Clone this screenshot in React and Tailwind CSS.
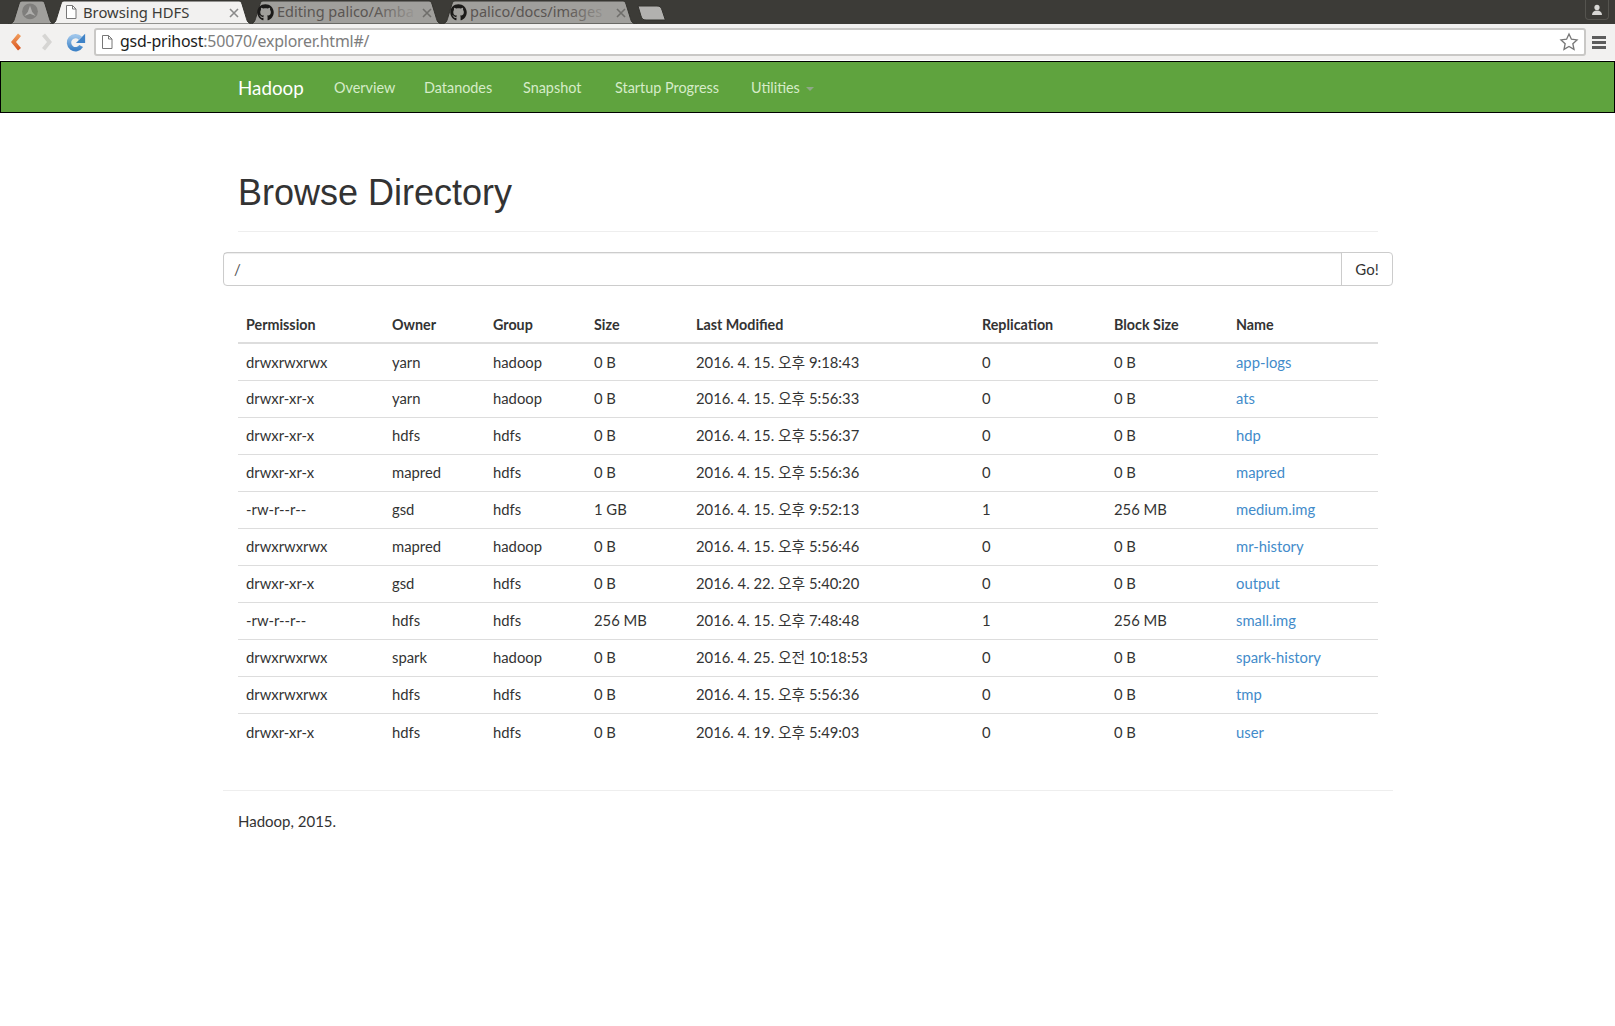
import { FaGithub } from "react-icons/fa";

const BODY_FONT = "font-['Lato','Noto_Sans_CJK_KR',sans-serif]";

const NAV_ITEMS = [
	{ label: 'Overview', className: 'w-[90px]' },
	{ label: 'Datanodes', className: 'w-[99px]' },
	{ label: 'Snapshot', className: 'w-[92px]' },
	{ label: 'Startup Progress', className: 'w-[136px]' },
];

const ROWS = [
	['drwxrwxrwx', 'yarn', 'hadoop', '0 B', '2016. 4. 15. 오후 9:18:43', '0', '0 B', 'app-logs'],
	['drwxr-xr-x', 'yarn', 'hadoop', '0 B', '2016. 4. 15. 오후 5:56:33', '0', '0 B', 'ats'],
	['drwxr-xr-x', 'hdfs', 'hdfs', '0 B', '2016. 4. 15. 오후 5:56:37', '0', '0 B', 'hdp'],
	['drwxr-xr-x', 'mapred', 'hdfs', '0 B', '2016. 4. 15. 오후 5:56:36', '0', '0 B', 'mapred'],
	['-rw-r--r--', 'gsd', 'hdfs', '1 GB', '2016. 4. 15. 오후 9:52:13', '1', '256 MB', 'medium.img'],
	['drwxrwxrwx', 'mapred', 'hadoop', '0 B', '2016. 4. 15. 오후 5:56:46', '0', '0 B', 'mr-history'],
	['drwxr-xr-x', 'gsd', 'hdfs', '0 B', '2016. 4. 22. 오후 5:40:20', '0', '0 B', 'output'],
	['-rw-r--r--', 'hdfs', 'hdfs', '256 MB', '2016. 4. 15. 오후 7:48:48', '1', '256 MB', 'small.img'],
	['drwxrwxrwx', 'spark', 'hadoop', '0 B', '2016. 4. 25. 오전 10:18:53', '0', '0 B', 'spark-history'],
	['drwxrwxrwx', 'hdfs', 'hdfs', '0 B', '2016. 4. 15. 오후 5:56:36', '0', '0 B', 'tmp'],
	['drwxr-xr-x', 'hdfs', 'hdfs', '0 B', '2016. 4. 19. 오후 5:49:03', '0', '0 B', 'user'],
];

const HEADERS = ['Permission', 'Owner', 'Group', 'Size', 'Last Modified', 'Replication', 'Block Size', 'Name'];

const COL_WIDTHS = ['w-[146px]', 'w-[101px]', 'w-[101px]', 'w-[102px]', 'w-[286px]', 'w-[132px]', 'w-[122px]', 'w-[150px]'];

const PageIcon = ({ className }) => (
	<svg viewBox="0 0 12 14" className={className} fill="none">
		<path d="M1.500 .5h6l3.500 3.500v9.500h-9.500z" fill="#fff" stroke="#777" />
		<path d="M7.500 .5v3.500h3.500" stroke="#777" />
	</svg>
);

const TabShape = ({ width, fill }) => (
	<svg width={width} height="24" className="absolute left-0 top-0">
		<path
			d={`M0 24 C5 24 6 21 7 17 L11 4 C12 1 13 1 16 1 L${width - 16} 1 C${width - 13} 1 ${width - 12} 1 ${width - 11} 4 L${width - 7} 17 C${width - 6} 21 ${width - 5} 24 ${width} 24 Z`}
			fill={fill}
			stroke="#33322e"
			strokeWidth="1"
		/>
	</svg>
);

const Tab = ({ width, active, className, children }) => (
	<div className={`relative h-6 shrink-0 ${className}`} style={{ width }}>
		<TabShape width={width} fill={active ? '#f2f1f0' : '#a09f9c'} />
		<div className="relative flex h-full items-center">{children}</div>
	</div>
);

const TabClose = ({ className }) => (
	<svg viewBox="0 0 10 10" className={`absolute h-[10px] w-[10px] ${className}`} stroke="currentColor" strokeWidth="1.6">
		<path d="M1 1l8 8M9 1l-8 8" />
	</svg>
);

const ChromeBar = () => (
	<div className="font-['Noto_Sans',sans-serif]">
		<div className="relative flex h-6 items-start bg-[#3c3b37] pl-2">
			<Tab width={48} className="">
				<svg viewBox="0 0 16 16" className="ml-[13px] h-[18px] w-[18px]">
					<circle cx="8" cy="7.500" r="7" fill="#7f7e7c" />
					<path d="M8 2.500l2 5.500 3 3.500-5-2-5 2 3-3.500z" fill="#b0afad" />
				</svg>
			</Tab>
			<Tab width={203} active className="z-10 ml-[-6px]">
				<PageIcon className="ml-[15px] h-[14px] w-3" />
				<span className="ml-[6px] text-[14.800px] text-[#3c3b37]">Browsing HDFS</span>
				<TabClose className="right-[14px] top-[8px] text-[#8a8a8a]" />
			</Tab>
			<Tab width={194} className="ml-[-4px]">
				<FaGithub className="ml-[8px] h-[17px] w-[17px] shrink-0 text-[#1b1a19]" />
				<span className="ml-[3px] whitespace-nowrap text-[14.500px] text-[#5a5552]">Editing palico/Amba</span>
				<span className="absolute left-[125px] top-[2px] h-[20px] w-[45px] bg-gradient-to-r from-[#a09f9c00] to-[#a09f9c]" />
				<TabClose className="right-[11px] top-[8px] text-[#6f6e6b]" />
			</Tab>
			<Tab width={196} className="ml-[-2px]">
				<FaGithub className="ml-[9px] h-[17px] w-[17px] shrink-0 text-[#1b1a19]" />
				<span className="ml-[3px] whitespace-nowrap text-[14.500px] text-[#5a5552]">palico/docs/images</span>
				<span className="absolute left-[125px] top-[2px] h-[20px] w-[45px] bg-gradient-to-r from-[#a09f9c00] to-[#a09f9c]" />
				<TabClose className="right-[11px] top-[8px] text-[#6f6e6b]" />
			</Tab>
			<svg width="31" height="16" className="mt-[5px] shrink-0">
				<path d="M1 1h19c3 0 4 1 5 4l3 9c0 1 0 1-1 1h-18c-3 0-4-1-5-4z" fill="#b2b1af" stroke="#33322e" />
			</svg>
			<div className="ml-auto mr-[6px] flex h-5 w-6 items-center justify-center rounded-b-[4px] border border-t-0 border-[#55544f]">
				<svg viewBox="0 0 12 12" className="h-[12px] w-[12px]" fill="#d8d7d5">
					<circle cx="6" cy="3.400" r="2.600" />
					<path d="M1 11c0-3 2-4.500 5-4.500s5 1.500 5 4.500z" />
				</svg>
			</div>
		</div>
		<div className="flex h-[36px] items-center bg-[#f2f1f0] pl-2 pr-[9px]">
			<svg viewBox="0 0 16 24" className="h-6 w-[16px]" fill="none">
				<defs>
					<linearGradient id="backFill" x1="0" y1="0" x2="0" y2="1">
						<stop offset="0" stopColor="#f2a05f" />
						<stop offset="1" stopColor="#d9531e" />
					</linearGradient>
				</defs>
				<path d="M10 3.500l3 2.500-5 6 5 6-3 2.500-7-8.500z" fill="url(#backFill)" />
			</svg>
			<svg viewBox="0 0 16 24" className="ml-[15px] h-6 w-[16px]">
				<path d="M6 3.500l-3 2.500 5 6-5 6 3 2.500 7-8.500z" fill="#d6d5d3" />
			</svg>
			<svg viewBox="0 0 24 24" className="ml-[10px] h-[21px] w-[21px]" fill="none">
				<defs>
					<linearGradient id="reloadFill" x1="0" y1="0" x2="0" y2="1">
						<stop offset="0" stopColor="#9cc4ea" />
						<stop offset="1" stopColor="#3f83c7" />
					</linearGradient>
				</defs>
				<path d="M18.500 16a7.500 7.500 0 1 1-1-9" stroke="url(#reloadFill)" strokeWidth="5" />
				<path d="M23 2v10.500h-10.500z" fill="#3f83c7" />
			</svg>
			<div className="ml-[8px] flex h-[28px] flex-1 items-center rounded-[3px] border-2 border-[#c9c8c6] bg-white pl-[5px] pr-[5px]">
				<PageIcon className="h-[14px] w-3" />
				<span className="ml-[7px] text-[15.900px] tracking-[-0.2px] text-[#1c1c1c]">gsd-prihost<span className="text-[#7d7d7d]">:50070/explorer.html#/</span></span>
				<svg viewBox="0 0 24 24" className="ml-auto h-5 w-5" fill="#fff" stroke="#777" strokeWidth="1.600">
					<path d="M12 2.500l2.900 6.200 6.700.8-5 4.600 1.400 6.700-6-3.400-6 3.400 1.400-6.700-5-4.600 6.700-.8z" />
				</svg>
			</div>
			<div className="ml-[6px] flex w-[14px] flex-col gap-[2px]">
				<span className="h-[3px] bg-[#5c5c5c]" />
				<span className="h-[3px] bg-[#5c5c5c]" />
				<span className="h-[3px] bg-[#5c5c5c]" />
			</div>
		</div>
	</div>
);

const Navbar = () => (
	<nav className={`mt-px flex h-[52px] items-center border border-black bg-[#5fa33e] pl-[237px] pt-[2px] ${BODY_FONT}`}>
		<span className="w-[96px] text-[18.800px] text-white">Hadoop</span>
		{NAV_ITEMS.map(item => (
			<span key={item.label} className={`text-[14.400px] text-[#d6ecc9] ${item.className}`}>{item.label}</span>
		))}
		<span className="flex items-center text-[14.400px] text-[#d6ecc9]">
			Utilities
			<span className="ml-[6px] mt-[2px] h-0 w-0 border-x-[4px] border-t-[4px] border-x-transparent border-t-[#8fa888]" />
		</span>
	</nav>
);

const FileTable = () => (
	<table className="ml-[15px] w-[1140px] table-fixed border-collapse text-[14.800px] text-[#333]">
		<thead>
			<tr className="h-[37px] border-b-2 border-[#ddd]">
				{HEADERS.map((h, i) => (
					<th key={h} className={`px-2 pt-[2px] text-left text-[14.300px] font-bold ${COL_WIDTHS[i]}`}>{h}</th>
				))}
			</tr>
		</thead>
		<tbody>
			{ROWS.map((row, r) => (
				<tr key={r} className="h-[37px] border-b border-[#ddd] last:border-b-0">
					{row.map((cell, i) => (
						<td key={i} className="px-2 whitespace-nowrap">
							{i === 7 ? <a href="#/" className="text-[#428bca]">{cell}</a> : cell}
						</td>
					))}
				</tr>
			))}
		</tbody>
	</table>
);

const App = () => {
	return (
		<div className="min-h-[1026px] bg-white">
			<ChromeBar />
			<Navbar />
			<main className={`ml-[223px] w-[1170px] ${BODY_FONT} text-[#333]`}>
				<div className="mx-[15px] mt-[60px] h-[59px] border-b border-[#eee]">
					<h1 className="font-['Liberation_Sans',sans-serif] text-[36px] leading-[40px] text-[#333]">Browse Directory</h1>
				</div>
				<div className="mt-5 flex h-[34px] rounded-[4px] border border-[#ccc]">
					<div className="flex flex-1 items-center px-[10px] text-[15px] text-[#555] shadow-[inset_0_1px_1px_rgba(0,0,0,0.075)]">/</div>
					<button type="button" className="w-[51px] border-l border-[#ccc] text-[15px] text-[#333]">Go!</button>
				</div>
				<div className="mt-5">
					<FileTable />
				</div>
				<div className="mt-10 border-t border-[#eee] pl-[15px] pt-5 text-[15px] leading-5">
					Hadoop, 2015.
				</div>
			</main>
		</div>
	);
};

export default App;
